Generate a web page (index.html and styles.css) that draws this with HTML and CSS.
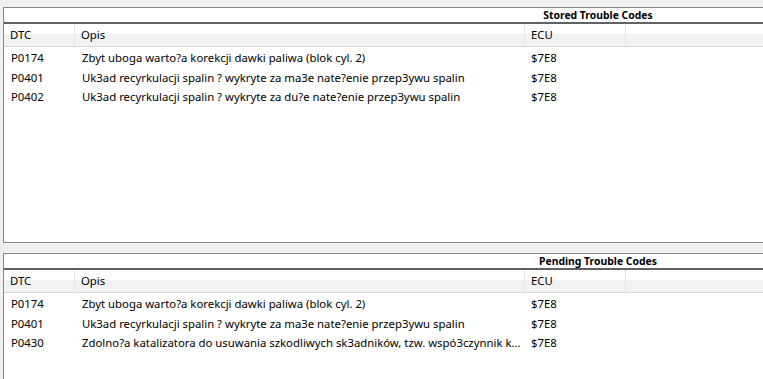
FILE: index.html
```html
<!DOCTYPE html>
<html>
<head>
<meta charset="utf-8">
<link rel="stylesheet" href="styles.css">
</head>
<body>
<div class="page">
  <section class="panel panel-top">
    <div class="title"><span>Stored Trouble Codes</span></div>
    <div class="list">
      <div class="head">
        <div class="hc c-dtc">DTC</div>
        <div class="hc c-opis">Opis</div>
        <div class="hc c-ecu">ECU</div>
        <div class="hc c-rest"></div>
      </div>
      <div class="row"><span class="c-dtc">P0174</span><span class="c-opis">Zbyt uboga warto?a korekcji dawki paliwa (blok cyl. 2)</span><span class="c-ecu">$7E8</span></div>
      <div class="row"><span class="c-dtc">P0401</span><span class="c-opis">Uk3ad recyrkulacji spalin ? wykryte za ma3e nate?enie przep3ywu spalin</span><span class="c-ecu">$7E8</span></div>
      <div class="row"><span class="c-dtc">P0402</span><span class="c-opis">Uk3ad recyrkulacji spalin ? wykryte za du?e nate?enie przep3ywu spalin</span><span class="c-ecu">$7E8</span></div>
    </div>
  </section>
  <section class="panel panel-bottom">
    <div class="title"><span>Pending Trouble Codes</span></div>
    <div class="list">
      <div class="head">
        <div class="hc c-dtc">DTC</div>
        <div class="hc c-opis">Opis</div>
        <div class="hc c-ecu">ECU</div>
        <div class="hc c-rest"></div>
      </div>
      <div class="row"><span class="c-dtc">P0174</span><span class="c-opis">Zbyt uboga warto?a korekcji dawki paliwa (blok cyl. 2)</span><span class="c-ecu">$7E8</span></div>
      <div class="row"><span class="c-dtc">P0401</span><span class="c-opis">Uk3ad recyrkulacji spalin ? wykryte za ma3e nate?enie przep3ywu spalin</span><span class="c-ecu">$7E8</span></div>
      <div class="row"><span class="c-dtc">P0430</span><span class="c-opis">Zdolno?a katalizatora do usuwania szkodliwych sk3adników, tzw. wspó3czynnik k...</span><span class="c-ecu">$7E8</span></div>
    </div>
  </section>
</div>
</body>
</html>
```

FILE: styles.css
```css
html, body {
  margin: 0;
  padding: 0;
  background: #f0f0f0;
  overflow: hidden;
}
body {
  font-family: "Noto Sans", "DejaVu Sans", sans-serif;
  font-size: 11.35px;
  color: #000;
}
.page {
  box-sizing: border-box;
  height: 379px;
  padding: 7px 0 0 3px;
  display: flex;
  flex-direction: column;
  gap: 10px;
}
.panel {
  background: #fff;
  border: 1px solid #828790;
  border-right: none;
  box-sizing: border-box;
  overflow: hidden;
}
.panel-top {
  height: 236px;
  flex: none;
}
.panel-bottom {
  flex: 1;
  border-bottom: none;
}
.title {
  height: 14px;
  line-height: 14px;
  font-weight: bold;
  font-size: 10.4px;
  border-bottom: 2px solid #5f6163;
  white-space: nowrap;
}
.title span {
  display: inline-block;
  width: 200px;
  margin-left: 494px;
  text-align: center;
}
.head {
  display: flex;
  height: 22px;
  background: linear-gradient(#ffffff 0%, #ffffff 45%, #f1f2f4 46%, #f1f2f4 100%);
  border-bottom: 1px solid #d5d5d5;
}
.hc {
  box-sizing: border-box;
  line-height: 22px;
  padding-left: 6px;
  border-right: 1px solid #e3e5e8;
}
.c-dtc { width: 71px; }
.c-opis { width: 450px; }
.c-ecu { width: 101px; }
.c-rest { flex: 1; border-right: none; }
.list {
  display: flex;
  flex-direction: column;
}
.head + .row { margin-top: 1px; }
.row {
  display: flex;
  height: 19.5px;
  line-height: 19.5px;
  padding-left: 7px;
  white-space: nowrap;
}
.row span { display: block; overflow: hidden; }
.row .c-dtc { width: 71px; }
.row .c-opis { width: 449px; }
.row .c-ecu { width: 100px; }
```
